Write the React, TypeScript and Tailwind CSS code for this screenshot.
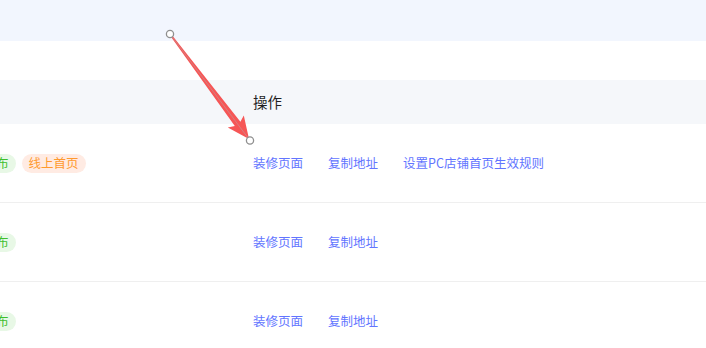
import type { ReactNode } from "react";

type Row = {
  tags: { label: string; tone: "green" | "orange" }[];
  actions: string[];
};

const rows: Row[] = [
  {
    tags: [
      { label: "已发布", tone: "green" },
      { label: "线上首页", tone: "orange" },
    ],
    actions: ["装修页面", "复制地址", "设置PC店铺首页生效规则"],
  },
  { tags: [{ label: "已发布", tone: "green" }], actions: ["装修页面", "复制地址"] },
  { tags: [{ label: "已发布", tone: "green" }], actions: ["装修页面", "复制地址"] },
];

function Tag({ tone, children }: { tone: "green" | "orange"; children: ReactNode }) {
  const cls =
    tone === "green"
      ? "bg-[#e8f8e6] text-[#3fbf2c]"
      : "bg-[#ffebe3] text-[#ff9a2e]";
  return (
    <span className={`inline-flex h-[19px] shrink-0 items-center rounded-full px-[7px] text-[12.5px] leading-none ${cls}`}>
      {children}
    </span>
  );
}

// 标注箭头(截图上的红色指示)
function Arrow() {
  return (
    <svg className="pointer-events-none absolute left-0 top-0" width="706" height="348" viewBox="0 0 706 348">
      <polygon
        points="169.3,34.5 234.8,125.9 227.8,127.4 249,139 243.8,115.4 240.4,121.7 170.7,33.5"
        fill="#f65656"
      />
      <line x1="170" y1="34" x2="250" y2="140.5" stroke="#c09a9a" strokeWidth="0.6" />
      <circle cx="170" cy="34" r="3.6" fill="#fff" stroke="#8f8f8f" strokeWidth="1.3" />
      <circle cx="250" cy="140.5" r="3.6" fill="#fff" stroke="#8f8f8f" strokeWidth="1.3" />
    </svg>
  );
}

export default function App() {
  return (
    <div
      className="relative h-[348px] w-[706px] overflow-hidden bg-white"
      style={{ fontFamily: '"Noto Sans CJK SC", "Noto Sans", sans-serif' }}
    >
      <div className="h-[41px] bg-[#f2f6fe]" />
      <div className="h-[39px]" />

      <div className="flex h-[44px] items-center bg-[#f5f7fa] text-[14.5px] text-[#1f1f1f]">
        <div className="w-[253px]" />
        <div>操作</div>
      </div>

      {rows.map((row, i) => (
        <div key={i} className="flex h-[79px] items-center border-b border-[#efefef]">
          <div className="flex w-[289px] -ml-[36px] items-center gap-[6px]">
            {row.tags.map((t) => (
              <Tag key={t.label} tone={t.tone}>
                {t.label}
              </Tag>
            ))}
          </div>
          <div className="flex items-center gap-[25px] text-[12.5px] text-[#6275ff]">
            {row.actions.map((a) => (
              <span key={a} className="cursor-pointer">
                {a}
              </span>
            ))}
          </div>
        </div>
      ))}

      <Arrow />
    </div>
  );
}
